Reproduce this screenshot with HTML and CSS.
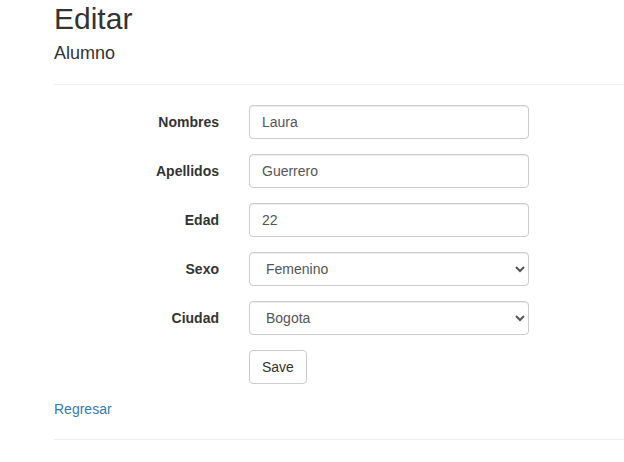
FILE: index.html
```html
<!DOCTYPE html>
<html lang="es">
<head>
<meta charset="utf-8">
<title>Editar</title>
<link rel="stylesheet" href="styles.css">
</head>
<body>
<div class="container">
  <h2 class="title">Editar</h2>
  <form class="form-horizontal">
    <h4 class="subtitle">Alumno</h4>
    <hr class="divider">
    <div class="form-group">
      <label class="control-label" for="nombres">Nombres</label>
      <div class="field"><input class="form-control" id="nombres" type="text" value="Laura"></div>
    </div>
    <div class="form-group">
      <label class="control-label" for="apellidos">Apellidos</label>
      <div class="field"><input class="form-control" id="apellidos" type="text" value="Guerrero"></div>
    </div>
    <div class="form-group">
      <label class="control-label" for="edad">Edad</label>
      <div class="field"><input class="form-control" id="edad" type="text" value="22"></div>
    </div>
    <div class="form-group">
      <label class="control-label" for="sexo">Sexo</label>
      <div class="field">
        <select class="form-control" id="sexo">
          <option>Masculino</option>
          <option selected>Femenino</option>
        </select>
      </div>
    </div>
    <div class="form-group">
      <label class="control-label" for="ciudad">Ciudad</label>
      <div class="field">
        <select class="form-control" id="ciudad">
          <option selected>Bogota</option>
          <option>Medellin</option>
          <option>Cali</option>
        </select>
      </div>
    </div>
    <div class="form-group">
      <span class="control-label"></span>
      <div class="field"><button type="button" class="btn">Save</button></div>
    </div>
  </form>
  <div class="back"><a href="#" class="link">Regresar</a></div>
  <hr class="divider footer-rule">
</div>
</body>
</html>
```

FILE: styles.css
```css
* { box-sizing: border-box; }
html, body { margin: 0; padding: 0; background: #fff; }
body {
  font-family: "Liberation Sans", Arial, Helvetica, sans-serif;
  font-size: 14px;
  line-height: 1.42857143;
  color: #333;
  overflow: hidden;
}
.container {
  padding-left: 54px;
}
.title {
  font-size: 30px;
  font-weight: 500;
  line-height: 1.1;
  margin: 2px 0 9px;
}
.subtitle {
  font-size: 18px;
  font-weight: 500;
  line-height: 1.1;
  margin: 9px 0 10px;
}
.divider {
  margin: 20px 0;
  border: 0;
  border-top: 1px solid #eee;
  height: 0;
}
.form-group {
  display: flex;
  gap: 30px;
  margin-bottom: 15px;
}
.control-label {
  width: 165px;
  flex: none;
  text-align: right;
  font-weight: bold;
  padding-top: 7px;
  margin: 0;
}
.field { flex: none; }
.form-control {
  display: block;
  width: 280px;
  height: 34px;
  padding: 6px 12px;
  font-family: inherit;
  font-size: 14px;
  line-height: 1.42857143;
  color: #555;
  background-color: #fff;
  border: 1px solid #ccc;
  border-radius: 4px;
  box-shadow: inset 0 1px 1px rgba(0,0,0,.075);
  margin: 0;
}
.btn {
  display: inline-block;
  padding: 6px 12px;
  font-family: inherit;
  font-size: 14px;
  line-height: 1.42857143;
  color: #333;
  background-color: #fff;
  border: 1px solid #ccc;
  border-radius: 4px;
  margin: 0;
  cursor: pointer;
}
.back { line-height: 20px; }
.link { color: #337ab7; text-decoration: none; }
```
